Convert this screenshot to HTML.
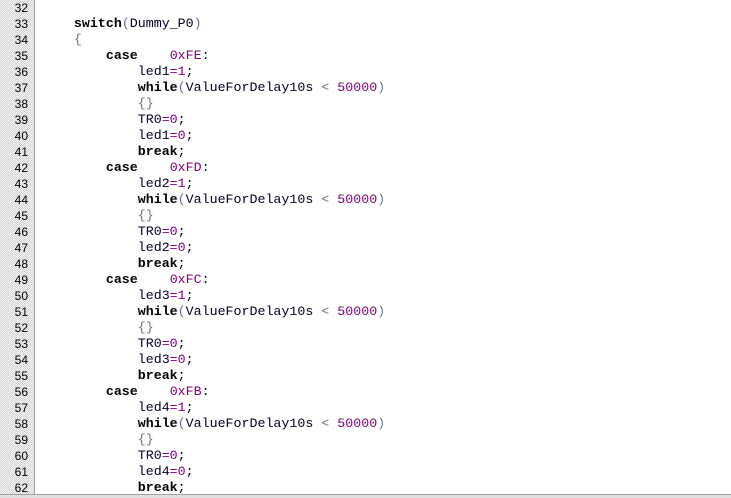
<!DOCTYPE html>
<html><head><style>
html,body{margin:0;padding:0;width:731px;height:497px;overflow:hidden;background:#fff;}
.g{position:absolute;left:0;top:0;width:34px;height:494px;background-color:#e8e8e8;
background-image:repeating-conic-gradient(#d4d4d4 0 25%,#f4f4f4 0 50%);background-size:2px 2px;}
.gl{position:absolute;left:34px;top:0;width:1px;height:494px;background:#a0a0a0;}
.n{position:absolute;left:0;width:28px;text-align:right;font-family:"Liberation Sans",sans-serif;font-size:12px;color:#000;line-height:16px;}
.c{position:absolute;left:42px;top:0;margin:0;font-family:"Liberation Mono","DejaVu Sans Mono",monospace;font-size:13.3px;line-height:16px;white-space:pre;color:#000020;}
b{font-weight:bold;color:#000;}
.p{color:#800080;}
.o{color:#707090;}
.sb{position:absolute;left:0;top:494px;width:731px;height:3px;background:#e0e0e0;border-top:1px solid #a0a0a0;}
</style></head><body>
<div class="g"></div><div class="gl"></div>
<div class="n" style="top:0">32</div><div class="n" style="top:16px">33</div><div class="n" style="top:32px">34</div><div class="n" style="top:48px">35</div><div class="n" style="top:64px">36</div><div class="n" style="top:80px">37</div><div class="n" style="top:96px">38</div><div class="n" style="top:112px">39</div><div class="n" style="top:128px">40</div><div class="n" style="top:144px">41</div><div class="n" style="top:160px">42</div><div class="n" style="top:176px">43</div><div class="n" style="top:192px">44</div><div class="n" style="top:208px">45</div><div class="n" style="top:224px">46</div><div class="n" style="top:240px">47</div><div class="n" style="top:256px">48</div><div class="n" style="top:272px">49</div><div class="n" style="top:288px">50</div><div class="n" style="top:304px">51</div><div class="n" style="top:320px">52</div><div class="n" style="top:336px">53</div><div class="n" style="top:352px">54</div><div class="n" style="top:368px">55</div><div class="n" style="top:384px">56</div><div class="n" style="top:400px">57</div><div class="n" style="top:416px">58</div><div class="n" style="top:432px">59</div><div class="n" style="top:448px">60</div><div class="n" style="top:464px">61</div><div class="n" style="top:480px">62</div>
<div class="c"> 
    <b>switch</b><span class="o">(</span>Dummy_P0<span class="o">)</span>
    <span class="o">{</span>
        <b>case</b>    <span class="p">0xFE</span>:
            led1<span class="p">=1</span>;
            <b>while</b><span class="o">(</span>ValueForDelay10s <span class="o">&lt;</span> <span class="p">50000</span><span class="o">)</span>
            <span class="o">{}</span>
            TR0<span class="p">=0</span>;
            led1<span class="p">=0</span>;
            <b>break</b>;
        <b>case</b>    <span class="p">0xFD</span>:
            led2<span class="p">=1</span>;
            <b>while</b><span class="o">(</span>ValueForDelay10s <span class="o">&lt;</span> <span class="p">50000</span><span class="o">)</span>
            <span class="o">{}</span>
            TR0<span class="p">=0</span>;
            led2<span class="p">=0</span>;
            <b>break</b>;
        <b>case</b>    <span class="p">0xFC</span>:
            led3<span class="p">=1</span>;
            <b>while</b><span class="o">(</span>ValueForDelay10s <span class="o">&lt;</span> <span class="p">50000</span><span class="o">)</span>
            <span class="o">{}</span>
            TR0<span class="p">=0</span>;
            led3<span class="p">=0</span>;
            <b>break</b>;
        <b>case</b>    <span class="p">0xFB</span>:
            led4<span class="p">=1</span>;
            <b>while</b><span class="o">(</span>ValueForDelay10s <span class="o">&lt;</span> <span class="p">50000</span><span class="o">)</span>
            <span class="o">{}</span>
            TR0<span class="p">=0</span>;
            led4<span class="p">=0</span>;
            <b>break</b>;</div>
<div class="sb"></div>
</body></html>
